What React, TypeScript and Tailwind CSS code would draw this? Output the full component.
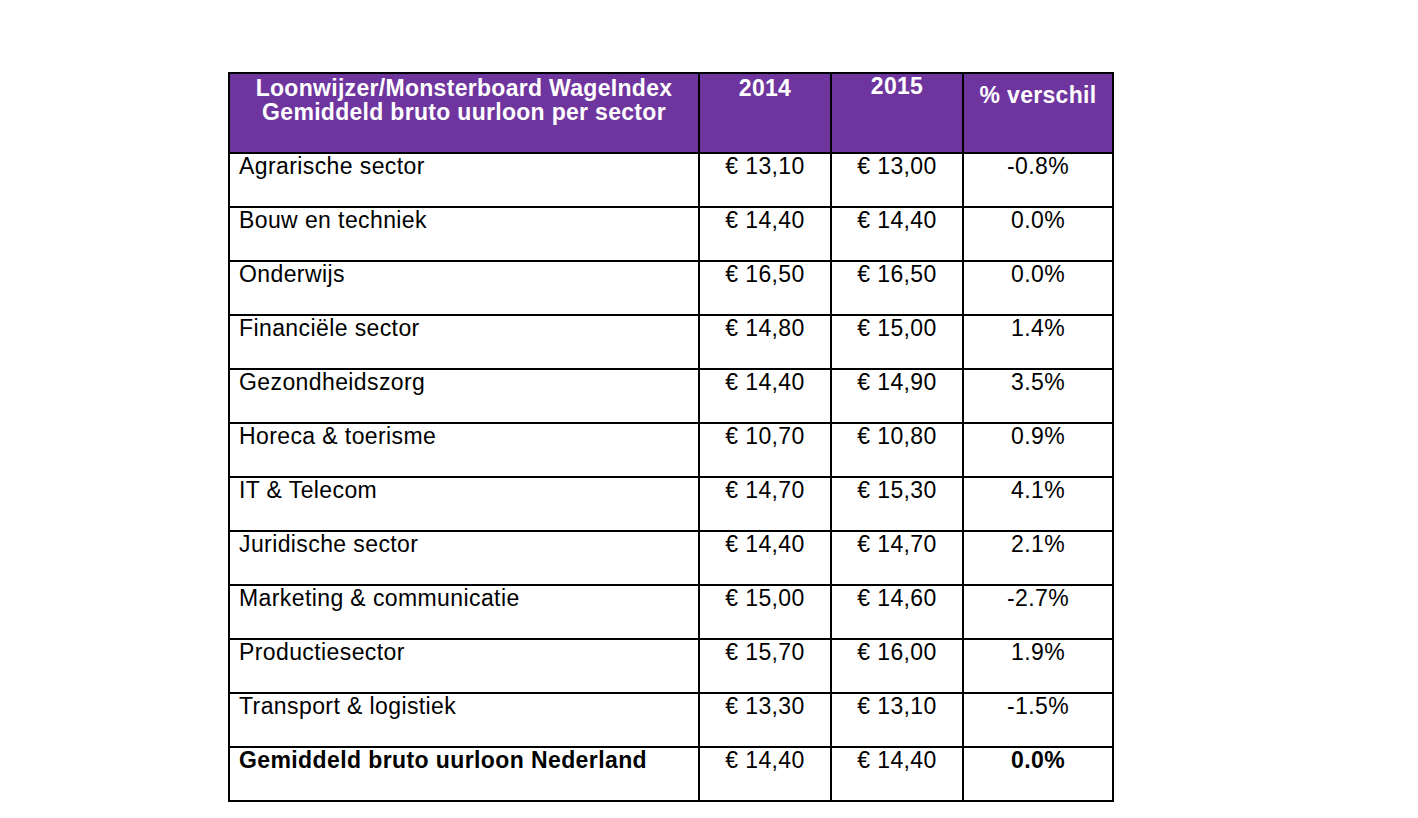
import React from 'react';

interface WageRow {
  sector: string;
  y2014: string;
  y2015: string;
  diff: string;
  bold?: boolean;
}

const rows: WageRow[] = [
  { sector: 'Agrarische sector', y2014: '€ 13,10', y2015: '€ 13,00', diff: '-0.8%' },
  { sector: 'Bouw en techniek', y2014: '€ 14,40', y2015: '€ 14,40', diff: '0.0%' },
  { sector: 'Onderwijs', y2014: '€ 16,50', y2015: '€ 16,50', diff: '0.0%' },
  { sector: 'Financiële sector', y2014: '€ 14,80', y2015: '€ 15,00', diff: '1.4%' },
  { sector: 'Gezondheidszorg', y2014: '€ 14,40', y2015: '€ 14,90', diff: '3.5%' },
  { sector: 'Horeca & toerisme', y2014: '€ 10,70', y2015: '€ 10,80', diff: '0.9%' },
  { sector: 'IT & Telecom', y2014: '€ 14,70', y2015: '€ 15,30', diff: '4.1%' },
  { sector: 'Juridische sector', y2014: '€ 14,40', y2015: '€ 14,70', diff: '2.1%' },
  { sector: 'Marketing & communicatie', y2014: '€ 15,00', y2015: '€ 14,60', diff: '-2.7%' },
  { sector: 'Productiesector', y2014: '€ 15,70', y2015: '€ 16,00', diff: '1.9%' },
  { sector: 'Transport & logistiek', y2014: '€ 13,30', y2015: '€ 13,10', diff: '-1.5%' },
  { sector: 'Gemiddeld bruto uurloon Nederland', y2014: '€ 14,40', y2015: '€ 14,40', diff: '0.0%', bold: true },
];

export default function App() {
  return (
    <div className="min-h-screen bg-white pl-[228px] pt-[72px] font-['Liberation_Sans',Arial,sans-serif]">
      <div className="grid w-[886px] grid-cols-[468px_130px_130px_148px] grid-rows-[78px] auto-rows-[52px] gap-[2px] bg-black p-[2px]">
        {/* Header */}
        <div className="bg-[#6f359e] pt-[2px] text-center text-[23px] font-bold leading-[24px] tracking-[0.3px] text-white">
          Loonwijzer/Monsterboard WageIndex
          <br />
          Gemiddeld bruto uurloon per sector
        </div>
        <div className="bg-[#6f359e] pt-[2px] text-center text-[23px] font-bold leading-[24px] tracking-[0.3px] text-white">
          2014
        </div>
        <div className="bg-[#6f359e] pt-0 text-center text-[23px] font-bold leading-[24px] tracking-[0.3px] text-white">
          2015
        </div>
        <div className="bg-[#6f359e] pt-[9px] text-center text-[23px] font-bold leading-[24px] tracking-[0.3px] text-white">
          % verschil
        </div>

        {/* Body rows */}
        {rows.map(row => (
          <React.Fragment key={row.sector}>
            <div
              className={`bg-white pl-[9px] text-[23px] leading-[24px] tracking-[0.4px] text-black ${
                row.bold ? 'font-bold' : ''
              }`}
            >
              {row.sector}
            </div>
            <div className="bg-white text-center text-[23px] leading-[24px] tracking-[0.4px] text-black">
              {row.y2014}
            </div>
            <div className="bg-white text-center text-[23px] leading-[24px] tracking-[0.4px] text-black">
              {row.y2015}
            </div>
            <div
              className={`bg-white text-center text-[23px] leading-[24px] tracking-[0.4px] text-black ${
                row.bold ? 'font-bold' : ''
              }`}
            >
              {row.diff}
            </div>
          </React.Fragment>
        ))}
      </div>
    </div>
  );
}
